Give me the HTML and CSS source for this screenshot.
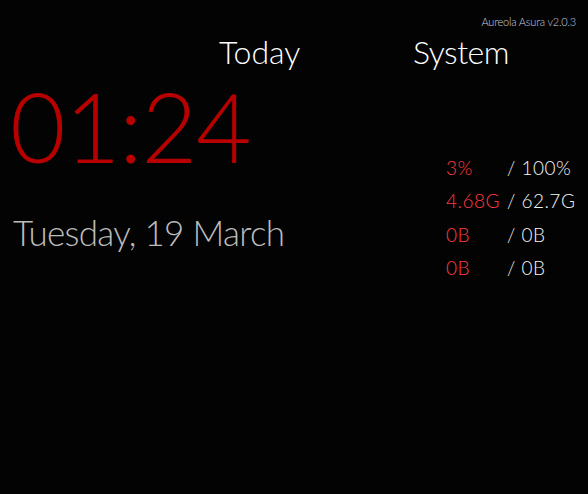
FILE: index.html
```html
<!DOCTYPE html>
<html>
<head>
<meta charset="utf-8">
<link rel="stylesheet" href="styles.css">
</head>
<body>
<div class="credit">Aureola Asura v2.0.3</div>
<div class="main">
  <section class="today">
    <h2 class="title today-title">Today</h2>
    <div class="clock">01:24</div>
    <div class="date">Tuesday, 19 March</div>
  </section>
  <section class="system">
    <h2 class="title system-title">System</h2>
    <table class="stats">
      <tr><td class="used">3%</td><td class="total">/ 100%</td></tr>
      <tr><td class="used">4.68G</td><td class="total">/ 62.7G</td></tr>
      <tr><td class="used">0B</td><td class="total">/ 0B</td></tr>
      <tr><td class="used">0B</td><td class="total">/ 0B</td></tr>
    </table>
  </section>
</div>
</body>
</html>
```
FILE: styles.css
```css
html, body {
  margin: 0;
  padding: 0;
  background: #030303;
  width: 588px;
  height: 494px;
  overflow: hidden;
  font-family: "Lato", "DejaVu Sans", sans-serif;
  font-weight: 300;
}
.credit {
  text-align: right;
  font-size: 11px;
  color: #c4d2e0;
  padding: 15px 12px 0 0;
  line-height: 13px;
  letter-spacing: -0.2px;
}
.main {
  display: flex;
}
.title {
  margin: 0;
  font-weight: 300;
  font-size: 32px;
  line-height: 40px;
  color: #ffffff;
}
.today {
  width: 400px;
  padding-left: 13px;
}
.today-title {
  margin-left: 206px;
  margin-top: 4px;
}
.clock {
  font-size: 96px;
  line-height: 96px;
  letter-spacing: -1px;
  color: #b80000;
  font-weight: 300;
  margin-left: -3px;
  margin-top: 6px;
}
.date {
  font-size: 35px;
  line-height: 44px;
  letter-spacing: -0.7px;
  color: #bcbcbc;
  margin-top: 36px;
}
.system {
  flex: 1;
}
.system-title {
  margin-top: 4px;
  letter-spacing: -0.5px;
}
.stats {
  border-collapse: collapse;
  margin-top: 79px;
  margin-left: 33px;
  font-size: 19px;
  letter-spacing: 0.5px;
}
.stats td {
  padding: 0;
  height: 33.3px;
  white-space: pre;
}
.used {
  color: #ff3a40;
  padding-right: 7px !important;
}
.total {
  color: #f4f4f4;
}
```
